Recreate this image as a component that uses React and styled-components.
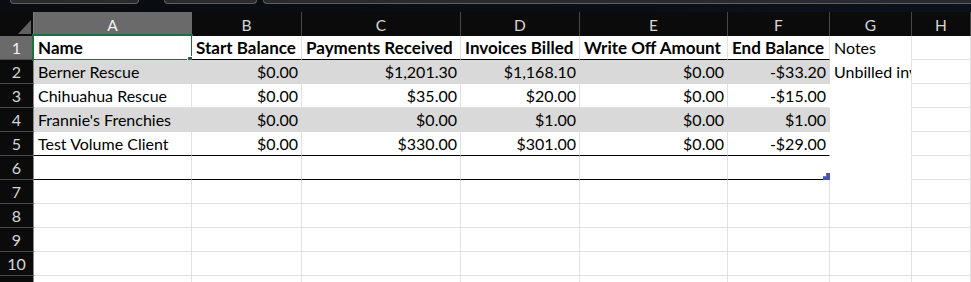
import React from "react";
import styled, { createGlobalStyle } from "styled-components";

const Global = createGlobalStyle`
  html, body { margin: 0; padding: 0; background: #ffffff; overflow: hidden; }
  body { font-family: Lato, "Open Sans", sans-serif; }
`;

const GRID = "#e1e1e1";
const FILL = "#d9d9d9";
const FONT = `Lato, "Open Sans", sans-serif`;

const Window = styled.div`
  width: 971px;
  height: 282px;
  overflow: hidden;
  display: flex;
  flex-direction: column;
  background: #ffffff;
`;

const TopStrip = styled.div`
  height: 12px;
  flex: none;
  display: flex;
  align-items: flex-start;
  padding-left: 10px;
  background: linear-gradient(90deg, #0a0c11 0%, #0a0e16 60%, #0c121d 100%);
  overflow: hidden;
`;

const Pill = styled.div`
  height: 3px;
  width: ${(p) => (p.$width ? `${p.$width}px` : "auto")};
  flex: ${(p) => (p.$grow ? "1" : "none")};
  margin-left: ${(p) => p.$gap || 0}px;
  margin-right: ${(p) => (p.$grow ? "-12px" : "0")};
  background: #2a2b2e;
  border: 1px solid #5d5e62;
  border-top: none;
  border-radius: 0 0 6px 6px;
`;

const Sheet = styled.div`
  display: grid;
  grid-template-columns: 34px 158px 110px 159px 119px 148px 102px 82px 1fr;
  grid-auto-rows: 24px;
  font-family: ${FONT};
  font-size: 16px;
  color: #000;
`;

const Corner = styled.div`
  position: relative;
  background: #0b0b0b;
  border-right: 1px solid #7c7c7c;
  box-sizing: border-box;
  &::after {
    content: "";
    position: absolute;
    right: 2px;
    bottom: 2px;
    width: 13px;
    height: 14px;
    background: #5f5f5f;
    clip-path: polygon(100% 0, 100% 100%, 0 100%);
  }
`;

const ColHead = styled.div`
  box-sizing: border-box;
  display: flex;
  align-items: center;
  justify-content: center;
  background: ${(p) => (p.$selected ? "#6a6a6a" : "#0b0b0b")};
  color: ${(p) => (p.$selected ? "#f2f2f2" : "#d6d6d6")};
  border-right: 1px solid ${(p) => (p.$selected ? "#6a6a6a" : "#474747")};
  font-size: 15.5px;
  padding-top: 1px;
`;

const RowHead = styled.div`
  box-sizing: border-box;
  display: flex;
  align-items: center;
  justify-content: center;
  background: ${(p) => (p.$selected ? "#6a6a6a" : "#0b0b0b")};
  color: ${(p) => (p.$selected ? "#f2f2f2" : "#d6d6d6")};
  border-right: 1px solid #8a8a8a;
  border-bottom: 1px solid #4a4a4a;
  font-size: 16px;
`;

const Cell = styled.div`
  position: relative;
  box-sizing: border-box;
  min-width: 0;
  padding: 0 3px 0 4px;
  line-height: 23px;
  white-space: nowrap;
  overflow: ${(p) => (p.$overlay ? "visible" : "hidden")};
  text-align: ${(p) => (p.$right ? "right" : "left")};
  font-weight: ${(p) => (p.$bold ? 700 : 400)};
  font-size: ${(p) => (p.$bold ? "17px" : "16px")};
  background: ${(p) => (p.$fill ? FILL : "#ffffff")};
  border-right: 1px solid ${(p) => p.$rightColor || (p.$fill ? FILL : GRID)};
  border-bottom: 1px solid
    ${(p) => (p.$line ? "#000" : p.$bottomColor || (p.$fill ? FILL : GRID))};
`;

const Selection = styled.div`
  position: absolute;
  left: -2px;
  top: -2px;
  right: -2px;
  bottom: -2px;
  border: 2px solid #1f6e43;
  pointer-events: none;
`;

const SelectionHandle = styled.div`
  position: absolute;
  right: -3px;
  bottom: -4px;
  width: 6px;
  height: 6px;
  background: #1f6e43;
  box-shadow: -1px -1px 0 #ffffff;
`;

const CopyHandle = styled.div`
  position: absolute;
  right: -1px;
  bottom: -1px;
  width: 7px;
  height: 7px;
  background: #4655b0;
  clip-path: polygon(45% 0, 100% 0, 100% 100%, 0 100%, 0 45%, 45% 45%);
`;

const COLS = ["A", "B", "C", "D", "E", "F", "G", "H"];

const HEADERS = [
  "Name",
  "Start Balance",
  "Payments Received",
  "Invoices Billed",
  "Write Off Amount",
  "End Balance",
];

const DATA = [
  ["Berner Rescue", "$0.00", "$1,201.30", "$1,168.10", "$0.00", "-$33.20"],
  ["Chihuahua Rescue", "$0.00", "$35.00", "$20.00", "$0.00", "-$15.00"],
  ["Frannie's Frenchies", "$0.00", "$0.00", "$1.00", "$0.00", "$1.00"],
  ["Test Volume Client", "$0.00", "$330.00", "$301.00", "$0.00", "-$29.00"],
];

const NOTES = { 1: "Notes", 2: "Unbilled invoices" };

function renderRow(r) {
  const cells = [];
  const isHeader = r === 1;
  const dataRow = r >= 2 && r <= 5 ? DATA[r - 2] : null;
  const fill = r === 2 || r === 4;
  const blackLine = r === 1 || r === 5 || r === 6;
  const inBlock = r >= 1 && r <= 6;

  cells.push(
    <RowHead key={`rh${r}`} $selected={isHeader}>
      {r}
    </RowHead>
  );

  for (let c = 0; c < 6; c++) {
    let text = "";
    if (isHeader) text = HEADERS[c];
    else if (dataRow) text = dataRow[c];
    const rightColor =
      c === 5 && r >= 2 && r <= 6 ? (fill ? FILL : "#ffffff") : undefined;
    cells.push(
      <Cell
        key={`c${r}-${c}`}
        $bold={isHeader}
        $right={!isHeader && c > 0}
        $fill={fill}
        $line={blackLine}
        $rightColor={rightColor}
        $overlay={(isHeader && c === 0) || (r === 6 && c === 5)}
      >
        {text}
        {isHeader && c === 0 && (
          <Selection>
            <SelectionHandle />
          </Selection>
        )}
        {r === 6 && c === 5 && <CopyHandle />}
      </Cell>
    );
  }

  cells.push(
    <Cell key={`g${r}`} $bottomColor={inBlock ? "#ffffff" : undefined}>
      {NOTES[r] || ""}
    </Cell>
  );
  cells.push(<Cell key={`h${r}`} />);
  return cells;
}

export default function App() {
  const rows = [];
  for (let r = 1; r <= 11; r++) rows.push(...renderRow(r));
  return (
    <Window>
      <Global />
      <TopStrip>
        <Pill $width={127} />
        <Pill $width={91} $gap={25} />
        <Pill $grow $gap={6} />
      </TopStrip>
      <Sheet>
        <Corner />
        {COLS.map((c) => (
          <ColHead key={c} $selected={c === "A"}>
            {c}
          </ColHead>
        ))}
        {rows}
      </Sheet>
    </Window>
  );
}
